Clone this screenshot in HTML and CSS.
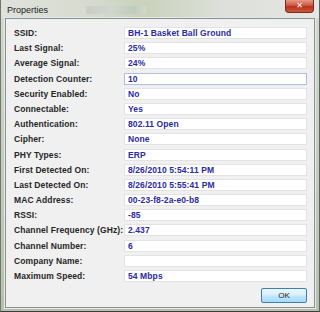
FILE: index.html
```html
<!DOCTYPE html>
<html lang="en">
<head>
    <meta charset="UTF-8">
    <title>Properties</title>
    <link rel="stylesheet" href="styles.css">
</head>
<body>
    <div class="window">
        <div class="titlebar">
            <span class="title">Properties</span>
            <span class="ghost-icons"></span>
            <button class="close">&#x2715;</button>
        </div>
        <div class="panel">
            <div class="fields">
                <div class="label">SSID:</div><div class="value">BH-1 Basket Ball Ground</div>
                <div class="label">Last Signal:</div><div class="value">25%</div>
                <div class="label">Average Signal:</div><div class="value">24%</div>
                <div class="label">Detection Counter:</div><div class="value focused">10</div>
                <div class="label">Security Enabled:</div><div class="value">No</div>
                <div class="label">Connectable:</div><div class="value">Yes</div>
                <div class="label">Authentication:</div><div class="value">802.11 Open</div>
                <div class="label">Cipher:</div><div class="value">None</div>
                <div class="label">PHY Types:</div><div class="value">ERP</div>
                <div class="label">First Detected On:</div><div class="value">8/26/2010 5:54:11 PM</div>
                <div class="label">Last Detected On:</div><div class="value">8/26/2010 5:55:41 PM</div>
                <div class="label">MAC Address:</div><div class="value">00-23-f8-2a-e0-b8</div>
                <div class="label">RSSI:</div><div class="value">-85</div>
                <div class="label">Channel Frequency (GHz):</div><div class="value">2.437</div>
                <div class="label">Channel Number:</div><div class="value">6</div>
                <div class="label">Company Name:</div><div class="value"></div>
                <div class="label">Maximum Speed:</div><div class="value">54 Mbps</div>
            </div>
            <div class="actions">
                <button class="ok">OK</button>
            </div>
        </div>
    </div>
</body>
</html>
```

FILE: styles.css
```css
body {
    margin: 0;
    font-family: 'Liberation Sans', Arial, sans-serif;
}

.window {
    width: 320px;
    height: 312px;
    box-sizing: border-box;
    padding: 0 4px 3px 4px;
    display: flex;
    flex-direction: column;
    background: linear-gradient(to bottom, #d6dad2 0%, #c9cfc3 40%, #b7c0ad 100%);
    border-left: 1px solid #6f7a6a;
    border-right: 1px solid #5e6460;
    border-bottom: 1px solid #3c3c3c;
}

.titlebar {
    height: 18px;
    display: flex;
    align-items: flex-start;
    background: linear-gradient(to right, #dfe2db 0%, #d6dace 30%, #c9d2bc 45%, #dde0da 70%, #e4e6e3 100%);
    margin: 0 -4px;
    padding-left: 6px;
}

.title {
    font-size: 9px;
    color: #222;
    margin-top: 5px;
}

.ghost-icons {
    width: 60px;
    height: 8px;
    margin: 6px 0 0 38px;
    background: linear-gradient(to right, #bfc4c0, #d0d6cf 40%, #b6c6bd 80%, #d8dcd6);
    opacity: 0.6;
}

.close {
    margin-left: auto;
    margin-right: 5px;
    width: 29px;
    height: 13px;
    padding: 0;
    border: 1px solid #7a2a20;
    border-top: none;
    border-radius: 0 0 4px 4px;
    background: linear-gradient(to bottom, #e39a88 0%, #d0573f 45%, #b8321d 55%, #c85a3c 100%);
    color: #fff;
    font-size: 8px;
    font-weight: bold;
    line-height: 12px;
    font-family: 'DejaVu Sans', sans-serif;
}

.panel {
    flex: 1;
    background: #f0f0f0;
    border: 1px solid #8b9095;
    box-shadow: 0 0 0 1px #e6e9e4;
    padding: 8px 7px 0 7px;
    display: flex;
    flex-direction: column;
}

.fields {
    display: grid;
    grid-template-columns: 111px 1fr;
    grid-auto-rows: 12px;
    row-gap: 3.2px;
}

.label {
    font-size: 8.5px;
    font-weight: bold;
    color: #262626;
    line-height: 12px;
    padding-left: 1px;
    white-space: nowrap;
    letter-spacing: 0.1px;
}

.value {
    background: #fff;
    border: 1px solid #e2e3e2;
    box-sizing: border-box;
    font-size: 8.5px;
    font-weight: bold;
    color: #2a2aa2;
    line-height: 10px;
    padding-left: 3px;
    letter-spacing: 0.1px;
}

.value.focused {
    border-color: #a9c1dd;
}

.actions {
    display: flex;
    justify-content: flex-end;
    margin-top: 6px;
}

.ok {
    width: 46px;
    height: 15px;
    padding: 0;
    border: 1px solid #3c7fb1;
    border-radius: 2px;
    background: linear-gradient(to bottom, #eaf6fd 0%, #d9f0fc 45%, #bee6fd 55%, #a7d9f5 100%);
    font-family: 'Liberation Sans', Arial, sans-serif;
    font-size: 8px;
    color: #222;
}
```
